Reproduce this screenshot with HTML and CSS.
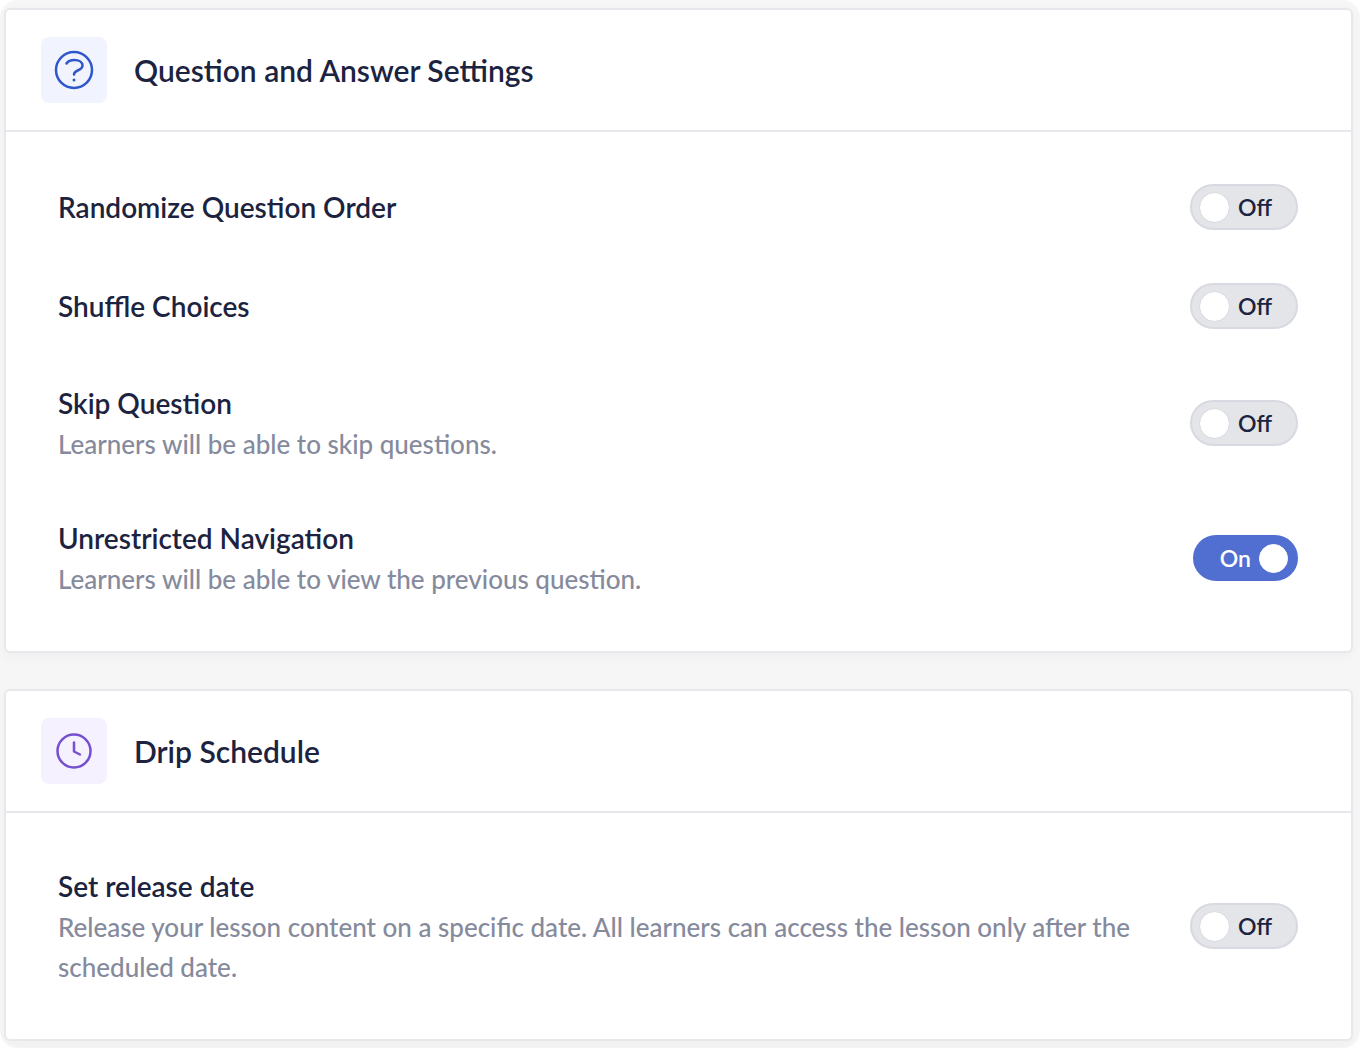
FILE: index.html
```
<!DOCTYPE html>
<html lang="en-us">

<head>
<meta charset="utf-8">
<meta name="viewport" content="width=device-width, initial-scale=1">
<title>Lesson Settings</title>
<link rel="stylesheet" href="styles.css">
</head>

<body>

<main class="settings">
    <section class="card">
        <header class="cardHeader">
            <span class="cardIcon question">
                <svg viewBox="0 0 40 40" width="40" height="40" stroke-width="2.5" aria-hidden="true">
                    <circle cx="20" cy="20" r="18"/>
                    <path d="M12.5 13.5C14 11 17 10 20.500 10c4.500 0 8 2 8 5.500 0 5.500-8.500 4-8.500 9"/>
                    <circle class="dot" cx="20" cy="30" r="1.500"/>
                </svg>
            </span>
            <h2>Question and Answer Settings</h2>
        </header>
        <div class="cardBody">
            <div class="row">
                <label class="rowTitle" for="randomize">Randomize Question Order</label>
                <label class="switch">
                    <input type="checkbox" id="randomize">
                    <span class="off">Off</span><span class="on">On</span>
                </label>
            </div>
            <div class="row">
                <label class="rowTitle" for="shuffle">Shuffle Choices</label>
                <label class="switch">
                    <input type="checkbox" id="shuffle">
                    <span class="off">Off</span><span class="on">On</span>
                </label>
            </div>
            <div class="row">
                <div class="rowText">
                    <label class="rowTitle" for="skip">Skip Question</label>
                    <p>Learners will be able to skip questions.</p>
                </div>
                <label class="switch">
                    <input type="checkbox" id="skip">
                    <span class="off">Off</span><span class="on">On</span>
                </label>
            </div>
            <div class="row">
                <div class="rowText">
                    <label class="rowTitle" for="navigation">Unrestricted Navigation</label>
                    <p>Learners will be able to view the previous question.</p>
                </div>
                <label class="switch">
                    <input type="checkbox" id="navigation" checked>
                    <span class="off">Off</span><span class="on">On</span>
                </label>
            </div>
        </div>
    </section>

    <section class="card">
        <header class="cardHeader">
            <span class="cardIcon clock">
                <svg viewBox="0 0 40 40" width="40" height="40" stroke-width="2.5" aria-hidden="true">
                    <circle cx="20" cy="20" r="16.5"/>
                    <path d="M20 11.5v9l6 3"/>
                </svg>
            </span>
            <h2>Drip Schedule</h2>
        </header>
        <div class="cardBody">
            <div class="row">
                <div class="rowText">
                    <label class="rowTitle" for="release">Set release date</label>
                    <p>Release your lesson content on a specific date. All learners can access the lesson only after the scheduled date.</p>
                </div>
                <label class="switch">
                    <input type="checkbox" id="release">
                    <span class="off">Off</span><span class="on">On</span>
                </label>
            </div>
        </div>
    </section>
</main>

</body>

</html>
```
FILE: styles.css
```
* {
    box-sizing: border-box;
}
body {
    margin: 0;
    background-color: #fff;
    font-family: Lato, "Open Sans", sans-serif;
    color: #1c2340;
}
h2, p {
    margin: 0;
}

.settings {
    display: flex;
    flex-direction: column;
    gap: 36px;
    padding: 8px 7px 7px 4px;
    background-color: #f6f6f6;
    border-radius: 18px;
}

/* cards */
.card {
    background-color: #fff;
    border: 2px solid #e7e8ec;
    border-radius: 6px;
    box-shadow: 0 4px 12px rgba(28, 35, 64, 0.03);
}
.cardHeader {
    display: flex;
    align-items: center;
    gap: 27px;
    padding: 27px 35px;
    border-bottom: 2px solid #e7e8ec;
}
.cardHeader h2 {
    font-size: 30px;
    line-height: 38px;
    font-weight: 600;
}
.cardIcon {
    display: flex;
    align-items: center;
    justify-content: center;
    width: 66px;
    height: 66px;
    border-radius: 8px;
}
.cardIcon svg {
    fill: none;
    stroke: currentColor;
    stroke-linecap: round;
    stroke-linejoin: round;
}
.cardIcon .dot {
    fill: currentColor;
    stroke: none;
}
.question {
    background-color: #f1f4ff;
    color: #2f57c9;
}
.clock {
    background-color: #f5f1ff;
    color: #7550cf;
}

/* setting rows */
.cardBody {
    display: flex;
    flex-direction: column;
    gap: 53px;
    padding: 52px 53px 52px 52px;
}
.row {
    display: flex;
    align-items: center;
    justify-content: space-between;
    gap: 36px;
}
.rowTitle {
    display: block;
    font-size: 28px;
    line-height: 42px;
    font-weight: 600;
}
.rowText p {
    font-size: 26px;
    line-height: 40px;
    font-weight: 500;
    color: #858a9c;
}

/* on / off switch */
.switch {
    display: flex;
    flex: none;
    align-items: center;
    gap: 8px;
    height: 46px;
    padding: 0 24px 0 7px;
    border: 2px solid #d8d9e1;
    border-radius: 23px;
    background-color: #e4e5e9;
    font-size: 23px;
    font-weight: 600;
    cursor: pointer;
}
.switch input {
    appearance: none;
    width: 31px;
    height: 31px;
    margin: 0;
    border: 1px solid #d8d9e1;
    border-radius: 50%;
    background-color: #fff;
    cursor: pointer;
}
.switch .on {
    display: none;
}
.switch:has(input:checked) {
    flex-direction: row-reverse;
    padding: 0 8px 0 25px;
    border-color: #516fd0;
    background-color: #516fd0;
    color: #fff;
}
.switch input:checked {
    width: 29px;
    height: 29px;
    border-color: #fff;
}
.switch input:checked ~ .on {
    display: inline;
}
.switch input:checked ~ .off {
    display: none;
}
```
